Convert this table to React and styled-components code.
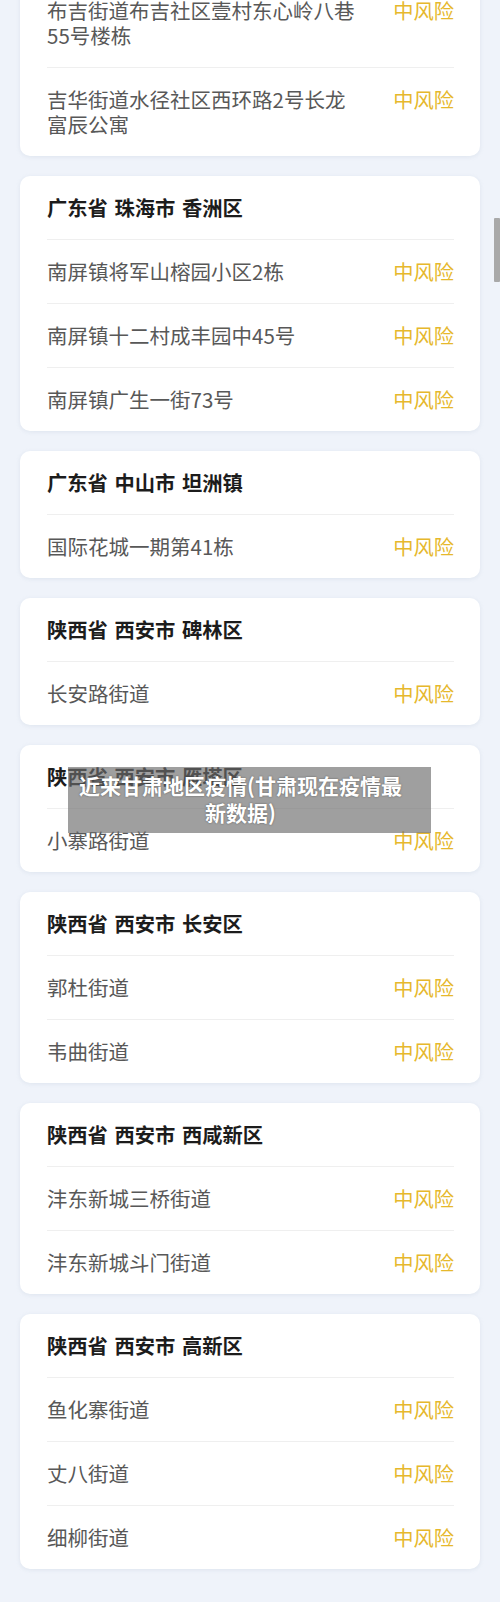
import React from "react";
import styled, { createGlobalStyle } from "styled-components";

const Global = createGlobalStyle`
  html, body { margin: 0; padding: 0; }
  body {
    background: #eff3fa;
    font-family: "Noto Sans CJK SC", "Noto Sans", sans-serif;
    overflow: hidden;
  }
`;

const Page = styled.div`
  position: relative;
  width: 500px;
  height: 1602px;
  overflow: hidden;
  background: #eff3fa;
`;

const List = styled.div`
  display: flex;
  flex-direction: column;
  gap: 20px;
  margin-top: -85px;
  padding: 0 20px;
`;

const Card = styled.section`
  background: #ffffff;
  border-radius: 10px;
  box-shadow: 0 1px 4px rgba(150, 165, 190, 0.18);
  padding: 0 26px 0 27px;
`;

const Header = styled.h3`
  margin: 0;
  padding: 20px 0 20px;
  font-size: 20.3px;
  line-height: 23px;
  font-weight: 700;
  color: #1c1c1c;
  word-spacing: 2px;
`;

const Row = styled.div`
  display: flex;
  align-items: center;
  justify-content: space-between;
  gap: 30px;
  border-top: 1px solid #efefef;
  padding: 19px 0;
`;

const Place = styled.span`
  flex: 1;
  font-size: 20.5px;
  line-height: 25px;
  color: #585858;
`;

const Risk = styled.span`
  flex: none;
  font-size: 20.3px;
  line-height: 25px;
  color: #e6b82c;
  align-self: flex-start;
`;

const Caption = styled.div`
  position: absolute;
  left: 68px;
  top: 767px;
  width: 363px;
  box-sizing: border-box;
  padding: 5px 20px 7px 2px;
  background: rgba(110, 110, 110, 0.66);
  color: #ffffff;
  font-size: 21px;
  line-height: 27px;
  font-weight: 700;
  text-align: center;
  text-shadow: 0 0 2px rgba(0, 0, 0, 0.45);
`;

const ScrollThumb = styled.div`
  position: absolute;
  right: 0;
  top: 218px;
  width: 6px;
  height: 64px;
  background: #a9a9a9;
  border-radius: 1px;
`;

const data = [
  {
    region: "广东省 深圳市 龙岗区",
    places: [
      "布吉街道布吉社区壹村东心岭八巷55号楼栋",
      "吉华街道水径社区西环路2号长龙富辰公寓",
    ],
  },
  {
    region: "广东省 珠海市 香洲区",
    places: ["南屏镇将军山榕园小区2栋", "南屏镇十二村成丰园中45号", "南屏镇广生一街73号"],
  },
  { region: "广东省 中山市 坦洲镇", places: ["国际花城一期第41栋"] },
  { region: "陕西省 西安市 碑林区", places: ["长安路街道"] },
  { region: "陕西省 西安市 雁塔区", places: ["小寨路街道"] },
  { region: "陕西省 西安市 长安区", places: ["郭杜街道", "韦曲街道"] },
  { region: "陕西省 西安市 西咸新区", places: ["沣东新城三桥街道", "沣东新城斗门街道"] },
  { region: "陕西省 西安市 高新区", places: ["鱼化寨街道", "丈八街道", "细柳街道"] },
];

export default function App() {
  return (
    <Page>
      <Global />
      <List>
        {data.map((c) => (
          <Card key={c.region}>
            <Header>{c.region}</Header>
            {c.places.map((p) => (
              <Row key={p}>
                <Place>{p}</Place>
                <Risk>中风险</Risk>
              </Row>
            ))}
          </Card>
        ))}
      </List>
      <Caption>近来甘肃地区疫情(甘肃现在疫情最新数据)</Caption>
      <ScrollThumb />
    </Page>
  );
}
